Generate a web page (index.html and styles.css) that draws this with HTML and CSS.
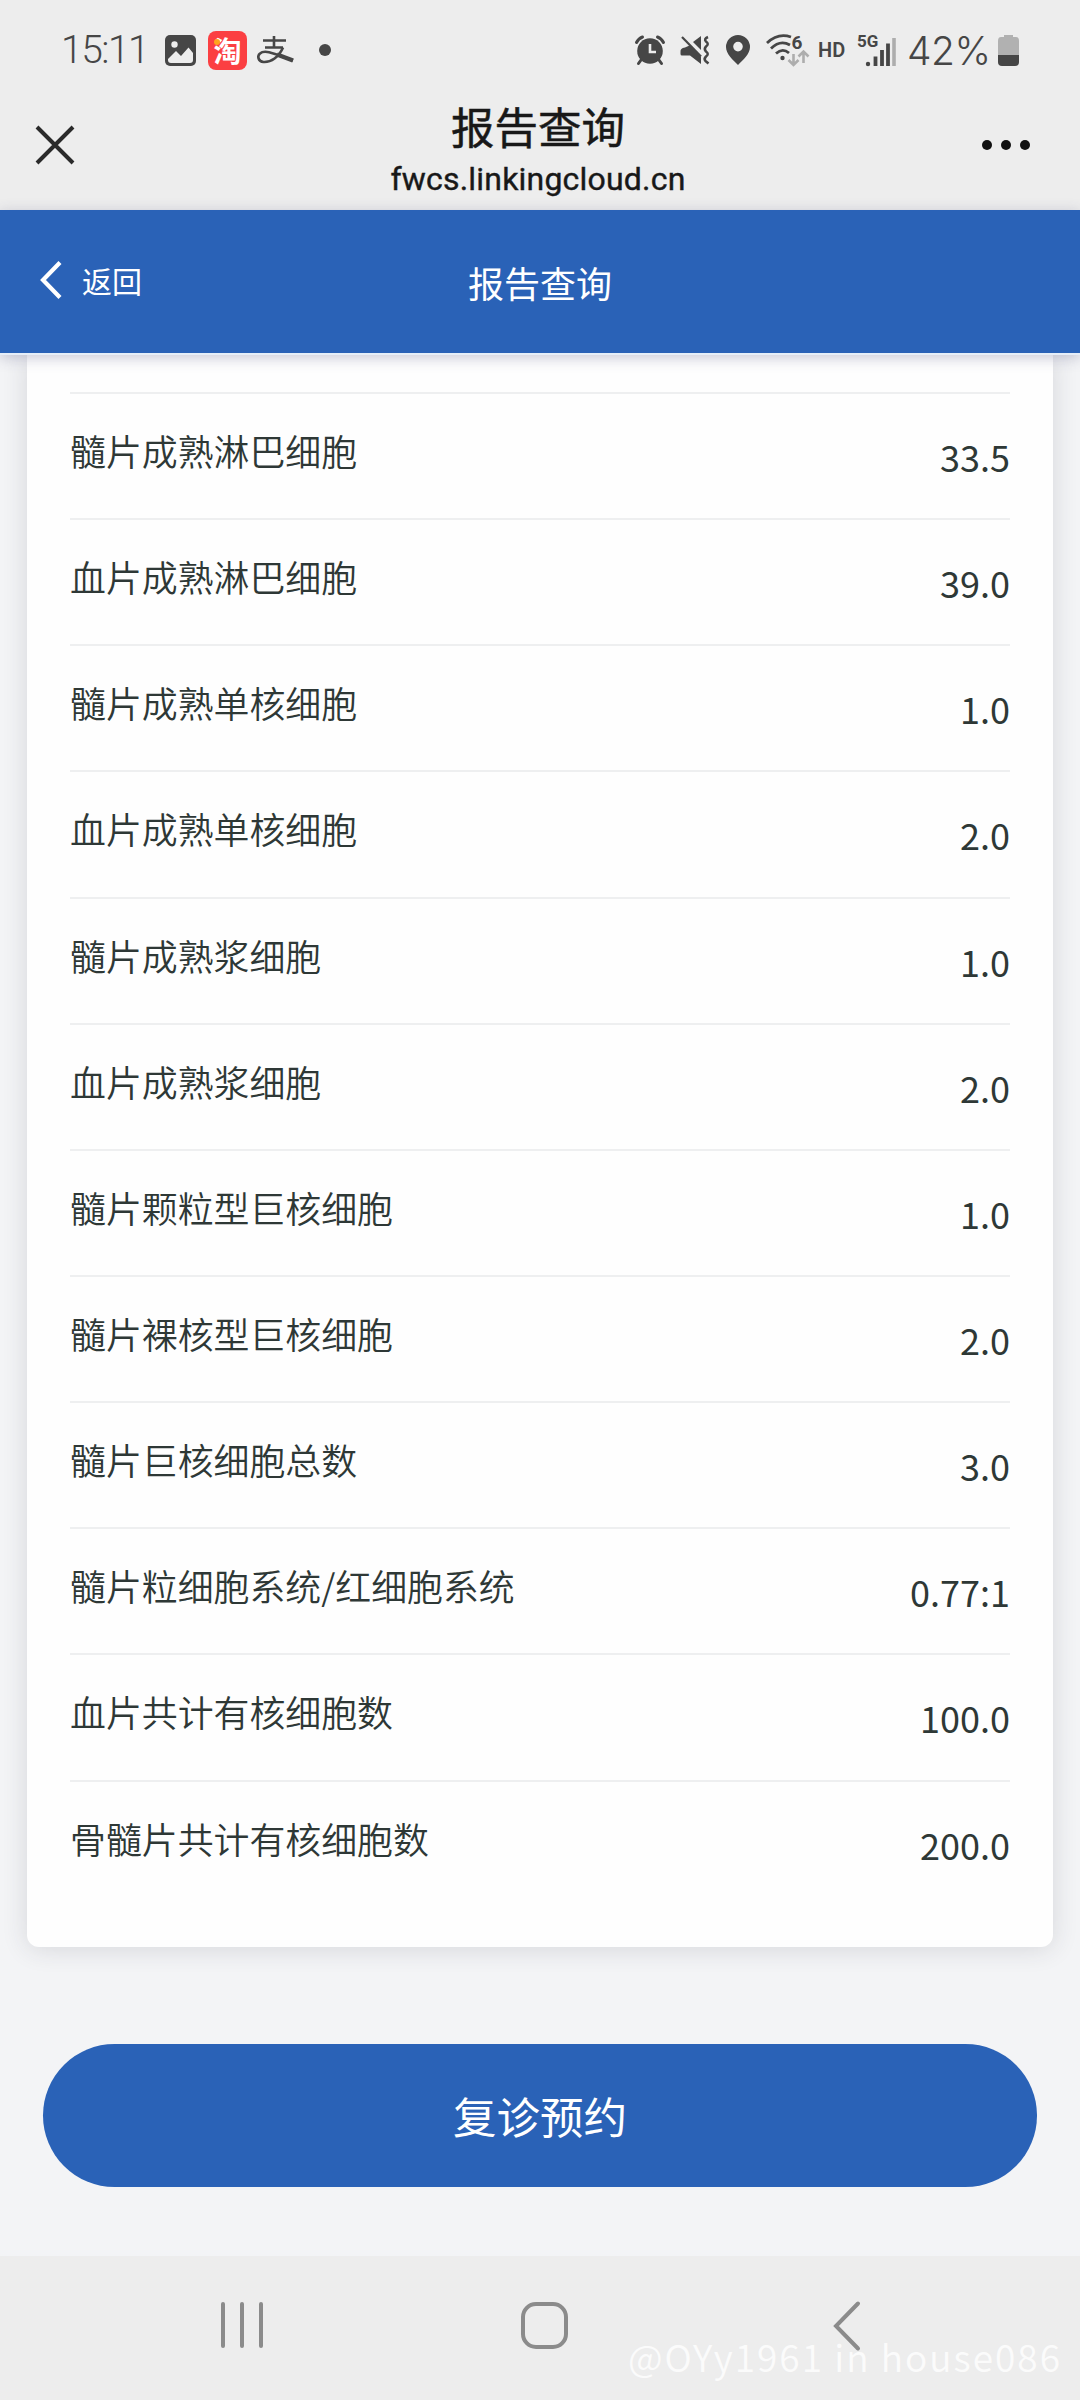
FILE: index.html
```html
<!DOCTYPE html>
<html lang="zh-CN">
<head>
    <meta charset="UTF-8">
    <meta name="viewport" content="width=device-width, initial-scale=1.0">
    <title>报告查询</title>
    <link rel="stylesheet" href="styles.css">
</head>
<body>
    <div class="status-bar">
        <div class="status-left">
            <span class="time">15:11</span>
            <svg class="icon-picture" width="31" height="31" viewBox="0 0 31 31">
                <rect width="31" height="31" rx="5" fill="#464646"/>
                <circle cx="9.5" cy="9.5" r="3.2" fill="#ededed"/>
                <path d="M3 24 L11 16 L16 21 L23.5 12.5 L28 18 V25 Q28 28 25 28 H6 Q3 28 3 25 Z" fill="#ededed"/>
            </svg>
            <span class="taobao"><i></i>淘</span>
            <svg class="icon-alipay" width="38" height="28" viewBox="0 0 38 28">
                <g fill="none" stroke="#464646">
                    <path d="M6 4.5 H29 M17 0 V11 M8 11.5 H26" stroke-width="2.6"/>
                    <path d="M26 11.5 C22 21 14 26.5 6.5 26 C1 25.5 0 20 3 17.5 C8 13 18 18 36 24.5" stroke-width="2.6"/>
                    <path d="M20 18.5 L36 24.5" stroke-width="4.5"/>
                </g>
            </svg>
            <span class="dot"></span>
        </div>
        <div class="status-right">
            <svg class="icon-alarm" width="30" height="30" viewBox="0 0 30 30">
                <circle cx="15" cy="16" r="12.8" fill="#464646"/>
                <path d="M1.5 7.5 Q3.5 3.5 7.5 2 M28.5 7.5 Q26.5 3.5 22.5 2 M6 25 L3.5 28.5 M24 25 L26.5 28.5" stroke="#464646" stroke-width="3" fill="none" stroke-linecap="round"/>
                <path d="M15 9 V17 H21" stroke="#ededed" stroke-width="2.6" fill="none"/>
            </svg>
            <svg class="icon-mute" width="30" height="30" viewBox="0 0 30 30">
                <path d="M0.5 17 Q0 13 5 12.5 L9.5 10.5 L21 22 V29 L10 20.5 H2 Q0.5 20.5 0.5 19 Z M13 7 L21 1 V15 Z" fill="#464646"/>
                <path d="M2 2 L21 21.5" stroke="#464646" stroke-width="2.2"/>
                <path d="M28 2 Q23.5 4 26 6.5 Q29.5 9 26 11.5 Q23.5 14 26 16.5 Q29.5 19 26 21.5 Q23.5 24 25.5 26 L28.5 28.5" stroke="#464646" stroke-width="2.5" fill="none"/>
            </svg>
            <svg class="icon-pin" width="24" height="30" viewBox="0 0 24 30">
                <path d="M12 0 A12 12 0 0 1 24 12 C24 19 17 25 12 30 C7 25 0 19 0 12 A12 12 0 0 1 12 0 Z M12 6.8 A4.8 4.8 0 1 0 12 16.4 A4.8 4.8 0 1 0 12 6.8 Z" fill="#464646" fill-rule="evenodd"/>
            </svg>
            <svg class="icon-wifi" width="43" height="33" viewBox="0 0 43 33">
                <g fill="none" stroke="#464646" stroke-width="2.8">
                    <path d="M1 9 Q12 -1.5 25 3"/>
                    <path d="M5 14.5 Q14 5.5 24 11"/>
                    <path d="M10 19.5 Q16.5 13.5 23 19"/>
                </g>
                <circle cx="16.5" cy="24" r="2.2" fill="#464646"/>
                <text x="25.5" y="14.5" class="wifi-num">6</text>
                <path d="M27.5 20 V30.5 M22.5 26 L27.5 31 L32.5 26 M37.5 29 V18 M32.5 22.5 L37.5 17.5 L42.5 22.5" stroke="#adadad" stroke-width="2.6" fill="none"/>
            </svg>
            <span class="hd">HD</span>
            <svg class="icon-signal" width="39" height="34" viewBox="0 0 39 34">
                <text x="0" y="14" class="net">5G</text>
                <path d="M18.5 33 V23.5 M25 33 V17 M31 33 V10.5" stroke="#464646" stroke-width="3.8"/>
                <path d="M37 33 V5" stroke="#adadad" stroke-width="3.6"/>
                <circle cx="11" cy="31" r="2.2" fill="#464646"/>
            </svg>
            <span class="percent">42%</span>
            <svg class="icon-battery" width="21" height="31" viewBox="0 0 21 31">
                <path d="M6 0 H15 V2 H18 Q21 2 21 6 V20 H0 V6 Q0 2 3 2 H6 Z" fill="#b1b1b1"/>
                <path d="M0 20 H21 V27 Q21 31 17 31 H4 Q0 31 0 27 Z" fill="#464646"/>
            </svg>
        </div>
    </div>

    <div class="web-bar">
        <svg class="icon-close" width="38" height="38" viewBox="0 0 38 38">
            <path d="M1 1 L37 37 M37 1 L1 37" stroke="#2a2a2a" stroke-width="4"/>
        </svg>
        <div class="web-title">
            <div class="web-name">报告查询</div>
            <div class="web-host">fwcs.linkingcloud.cn</div>
        </div>
        <div class="more"><i></i><i></i><i></i></div>
    </div>

    <div class="page-header">
        <div class="back">
            <svg width="22" height="38" viewBox="0 0 22 38">
                <path d="M20 1.5 L3 19 L20 36.5" stroke="#fff" stroke-width="4.2" fill="none"/>
            </svg>
            <span>返回</span>
        </div>
        <div class="page-title">报告查询</div>
    </div>

    <div class="content">
        <div class="card">
            <div class="row"><span class="label">髓片成熟淋巴细胞</span><span class="value">33.5</span></div>
            <div class="row"><span class="label">血片成熟淋巴细胞</span><span class="value">39.0</span></div>
            <div class="row"><span class="label">髓片成熟单核细胞</span><span class="value">1.0</span></div>
            <div class="row"><span class="label">血片成熟单核细胞</span><span class="value">2.0</span></div>
            <div class="row"><span class="label">髓片成熟浆细胞</span><span class="value">1.0</span></div>
            <div class="row"><span class="label">血片成熟浆细胞</span><span class="value">2.0</span></div>
            <div class="row"><span class="label">髓片颗粒型巨核细胞</span><span class="value">1.0</span></div>
            <div class="row"><span class="label">髓片裸核型巨核细胞</span><span class="value">2.0</span></div>
            <div class="row"><span class="label">髓片巨核细胞总数</span><span class="value">3.0</span></div>
            <div class="row"><span class="label">髓片粒细胞系统/红细胞系统</span><span class="value">0.77:1</span></div>
            <div class="row"><span class="label">血片共计有核细胞数</span><span class="value">100.0</span></div>
            <div class="row"><span class="label">骨髓片共计有核细胞数</span><span class="value">200.0</span></div>
        </div>
        <button class="book-btn">复诊预约</button>
    </div>

    <div class="nav-bar">
        <svg class="nav-recent" width="44" height="46" viewBox="0 0 44 46">
            <path d="M3 2 V44 M22 2 V44 M41 2 V44" stroke="#8b8b8b" stroke-width="4" stroke-linecap="round"/>
        </svg>
        <svg class="nav-home" width="47" height="47" viewBox="0 0 47 47">
            <rect x="2" y="2" width="43" height="43" rx="13" stroke="#8b8b8b" stroke-width="4" fill="none"/>
        </svg>
        <svg class="nav-back" width="28" height="50" viewBox="0 0 28 50">
            <path d="M25 2.5 L3 25 L25 47.5" stroke="#8b8b8b" stroke-width="4" fill="none" stroke-linecap="round"/>
        </svg>
        <div class="watermark">@OYy1961 in house086</div>
    </div>
</body>
</html>
```

FILE: styles.css
```css
* {
    box-sizing: border-box;
}
body {
    margin: 0;
    width: 1080px;
    height: 2400px;
    display: flex;
    flex-direction: column;
    overflow: hidden;
    background-color: #f3f4f6;
    font-family: "Noto Sans CJK SC", sans-serif;
}
svg {
    display: block;
    flex: none;
    overflow: visible;
}

/* phone status bar */
.status-bar {
    height: 100px;
    display: flex;
    justify-content: space-between;
    align-items: center;
    padding: 0 61px 0 61px;
    background-color: #ededed;
    color: #464646;
    font-family: Roboto, sans-serif;
}
.status-left, .status-right {
    display: flex;
    align-items: center;
}
.time {
    width: 104px;
    font-size: 39px;
    font-weight: 350;
    letter-spacing: -1.5px;
}
.taobao {
    position: relative;
    width: 39px;
    height: 39px;
    margin: 0 10px 0 12px;
    border-radius: 8px;
    background-color: #fb3f42;
    color: #fff;
    font: 700 28px/39px "Noto Sans CJK SC", sans-serif;
    text-align: center;
}
.taobao i {
    position: absolute;
    left: 6px;
    top: 8px;
    width: 6px;
    height: 6px;
    border-radius: 50%;
    background-color: #ffa41c;
}
.dot {
    width: 12px;
    height: 12px;
    margin-left: 24px;
    border-radius: 50%;
    background-color: #464646;
}
.icon-mute {
    margin-left: 15px;
}
.icon-pin {
    margin-left: 16px;
}
.icon-wifi {
    margin-left: 16px;
}
.wifi-num {
    font: 700 19px Roboto, sans-serif;
    fill: #464646;
}
.hd {
    margin-left: 9px;
    width: 39px;
    font-size: 20px;
    font-weight: 600;
}
.net {
    font: 700 17px Roboto, sans-serif;
    fill: #464646;
}
.percent {
    width: 91px;
    margin-left: 11px;
    font-family: Inter, sans-serif;
    font-size: 39px;
    font-weight: 350;
    letter-spacing: -0.5px;
    white-space: nowrap;
}

/* webview title bar */
.web-bar {
    height: 110px;
    display: grid;
    grid-template-columns: 1fr auto 1fr;
    align-items: start;
    padding: 0 50px 0 46px;
    background-color: #ededed;
    color: #181818;
}
.icon-close {
    margin: 26px 0 0 -10px;
}
.web-title {
    justify-self: center;
    width: 320px;
    text-align: center;
}
.web-name {
    font-size: 43.5px;
    font-weight: 400;
    line-height: 51px;
    -webkit-text-stroke: 0.5px #181818;
}
.web-host {
    font: 400 32px/56px Roboto, sans-serif;
    letter-spacing: 0.2px;
    -webkit-text-stroke: 0.4px #181818;
}
.more {
    display: flex;
    justify-content: flex-end;
    gap: 9px;
    margin-top: 40px;
}
.more i {
    width: 10px;
    height: 10px;
    border-radius: 50%;
    background-color: #111;
}

/* blue page header */
.page-header {
    position: relative;
    z-index: 1;
    height: 143px;
    display: grid;
    grid-template-columns: 1fr auto 1fr;
    align-items: center;
    padding: 0 40px;
    background-color: #2a62b7;
    box-shadow: 0 2px 0 #e6eef8, 0 4px 14px rgba(60, 60, 110, 0.3);
    color: #fff;
}
.back {
    display: flex;
    align-items: center;
    gap: 20px;
    padding-bottom: 3px;
    font-size: 30px;
}
.page-title {
    font-size: 36px;
}

/* report list */
.content {
    flex: 1;
    padding: 0 27px;
}
.card {
    height: 1594px;
    padding: 39px 43px 0;
    background-color: #fefefe;
    border-radius: 0 0 12px 12px;
    box-shadow: 0 2px 26px rgba(40, 40, 60, 0.14);
}
.row {
    height: 126.15px;
    display: flex;
    justify-content: space-between;
    border-top: 2px solid #eeeff0;
    color: #2e3836;
    font-size: 36px;
    line-height: 52px;
    font-weight: 350;
}
.label {
    padding-top: 30px;
    font-size: 35.9px;
}
.value {
    padding-top: 36px;
    font-weight: 400;
}
.book-btn {
    display: block;
    width: 994px;
    height: 143px;
    margin: 97px auto 0;
    border: none;
    border-radius: 72px;
    background-color: #2a62b7;
    color: #fff;
    font-family: inherit;
    font-size: 43.5px;
}

/* system navigation */
.nav-bar {
    position: relative;
    height: 144px;
    display: flex;
    align-items: flex-start;
    padding: 46px 0 0 220px;
    background-color: #ededed;
}
.nav-home {
    margin-left: 257px;
}
.nav-back {
    margin: -1px 0 0 265px;
}
.watermark {
    position: absolute;
    right: 18px;
    bottom: 18px;
    color: rgba(255, 255, 255, 0.8);
    font-size: 37px;
    font-weight: 350;
    line-height: 52px;
    letter-spacing: 2px;
    white-space: nowrap;
}
```
